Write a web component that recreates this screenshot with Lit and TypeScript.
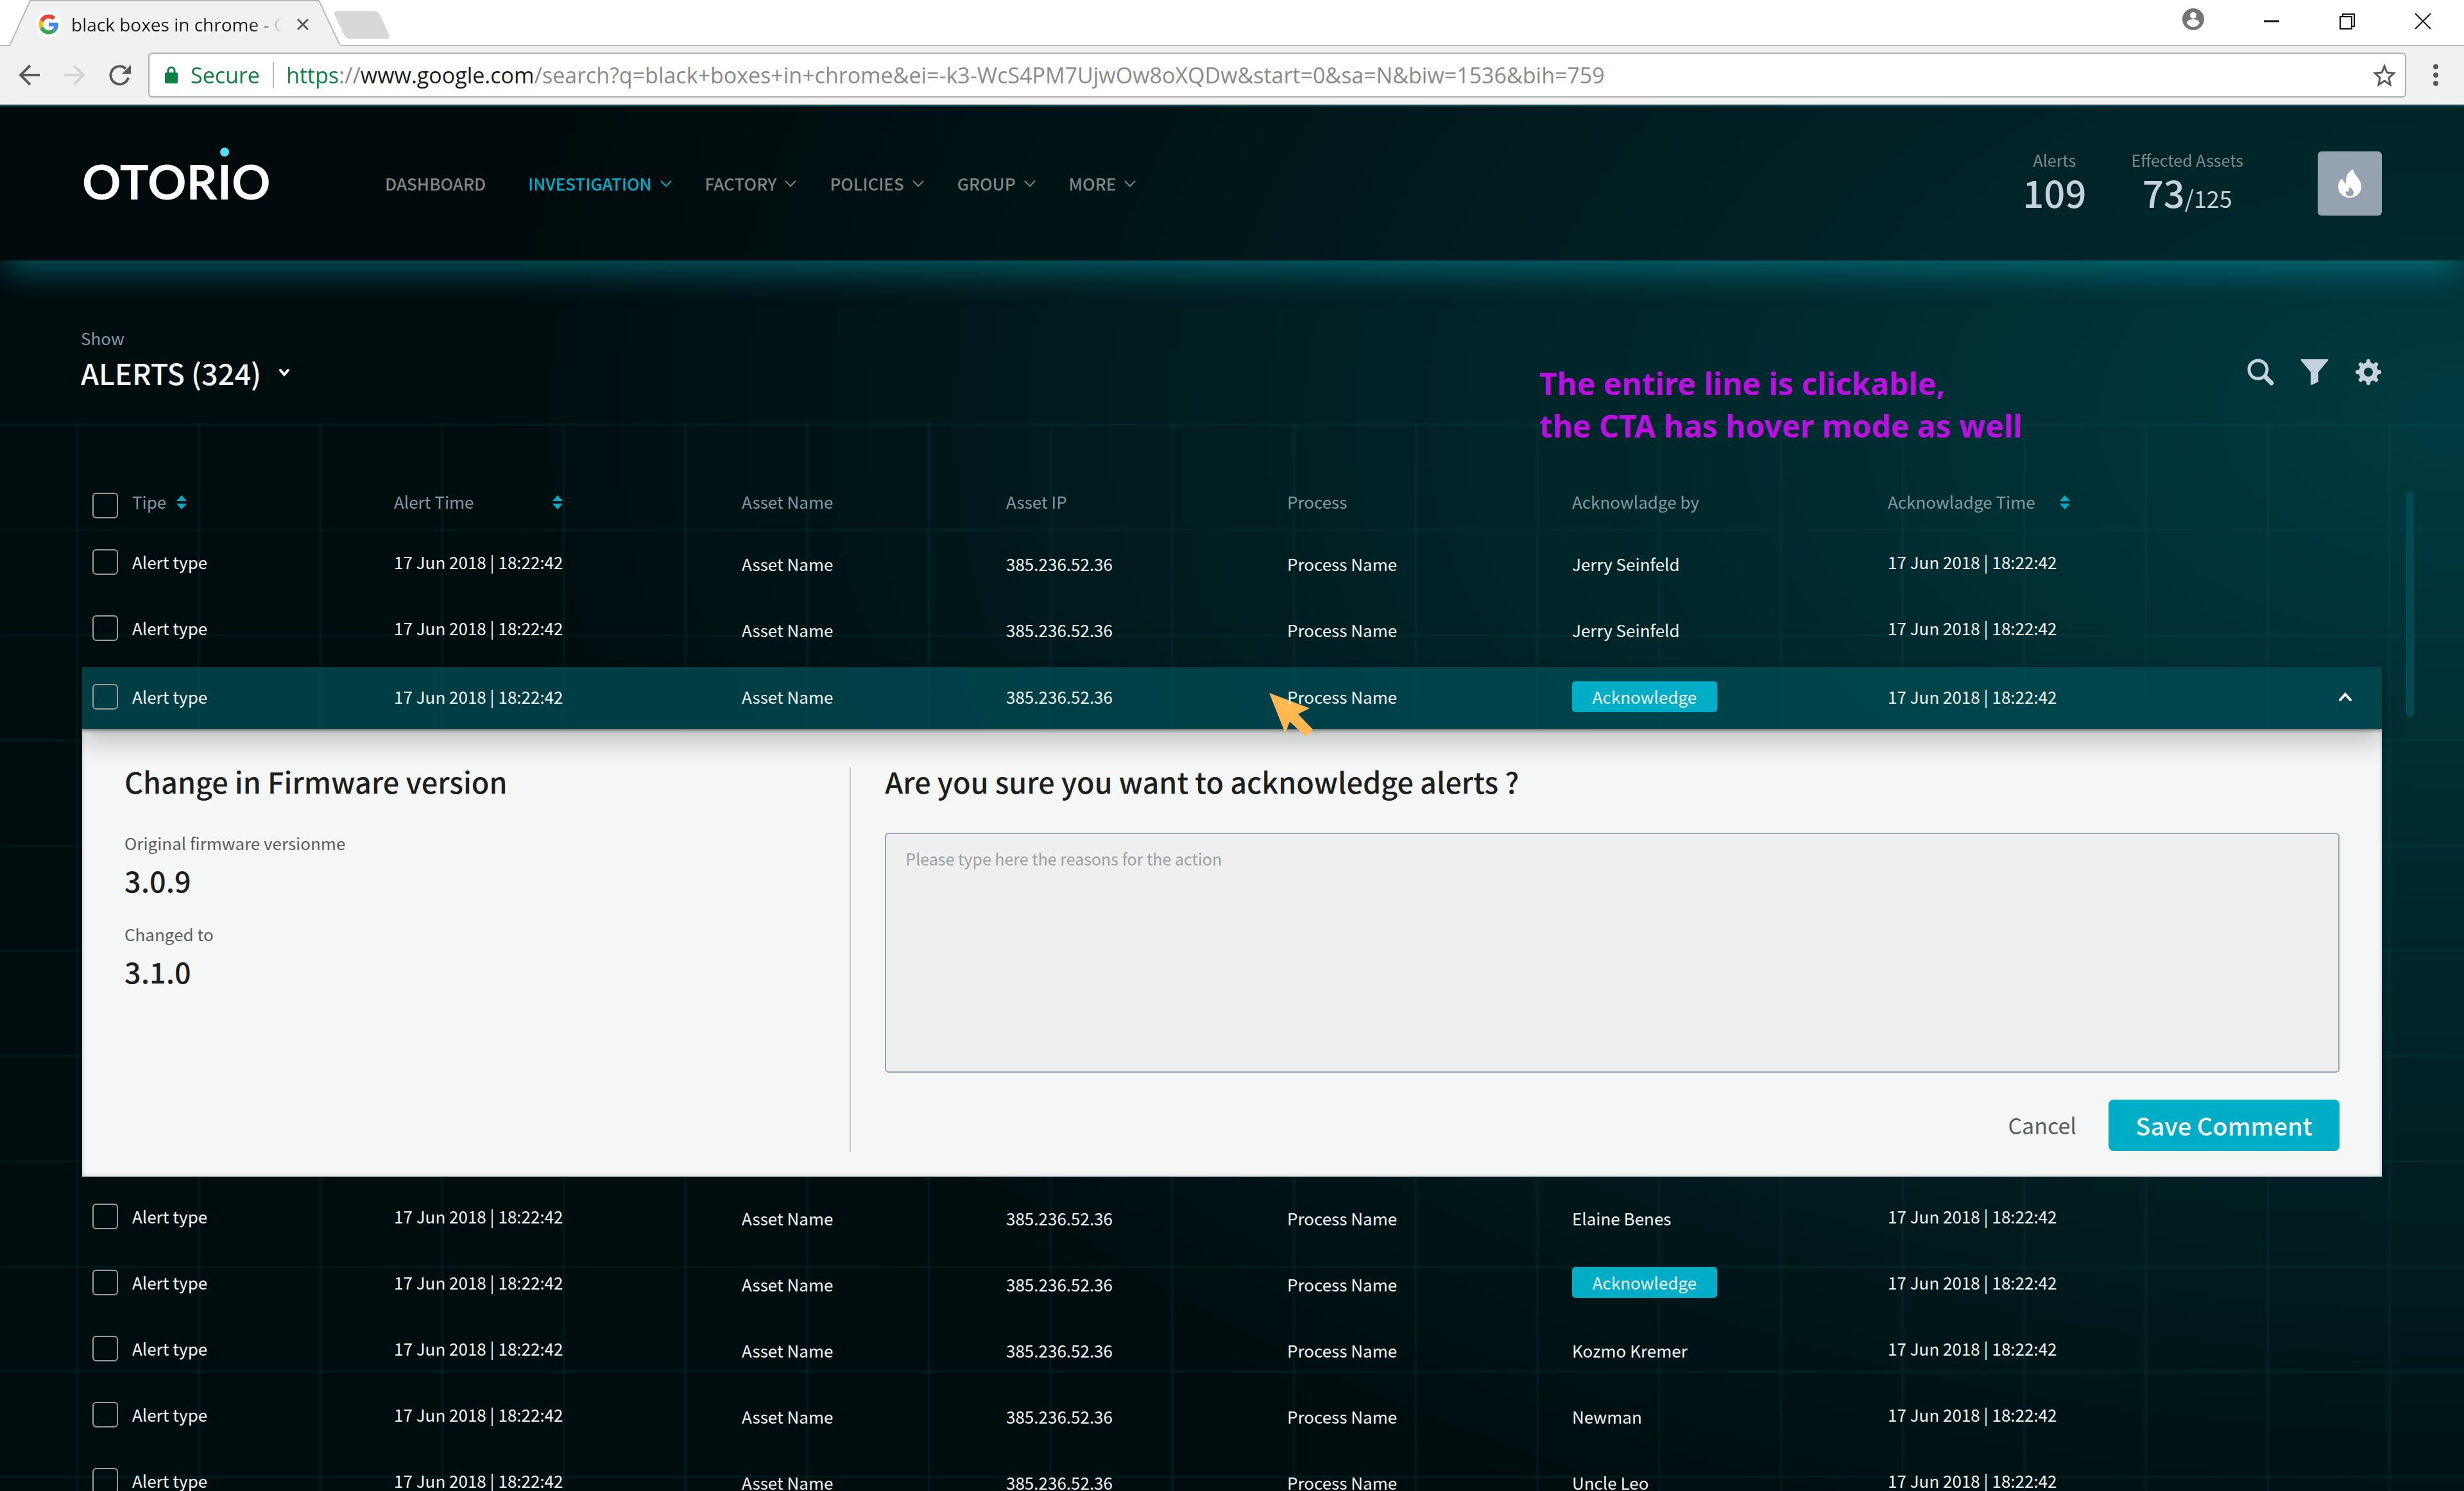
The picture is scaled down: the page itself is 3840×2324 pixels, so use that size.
import { LitElement, html, css, svg, nothing } from "lit";
import { customElement, property, state } from "lit/decorators.js";
import { classMap } from "lit/directives/class-map.js";

interface AlertRow {
  type: string;
  time: string;
  asset: string;
  ip: string;
  process: string;
  by: string | null;
  ackTime: string;
}

const STAMP = "17 Jun 2018 | 18:22:42";

const makeRow = (by: string | null): AlertRow => ({
  type: "Alert type",
  time: STAMP,
  asset: "Asset Name",
  ip: "385.236.52.36",
  process: "Process Name",
  by,
  ackTime: STAMP,
});

const ROWS: AlertRow[] = [
  makeRow("Jerry Seinfeld"),
  makeRow("Jerry Seinfeld"),
  makeRow(null),
  makeRow("Elaine Benes"),
  makeRow(null),
  makeRow("Kozmo Kremer"),
  makeRow("Newman"),
  makeRow("Uncle Leo"),
];

const HEADINGS = [
  { label: "Tipe", sort: "near" },
  { label: "Alert Time", sort: "far" },
  { label: "Asset Name", sort: "" },
  { label: "Asset IP", sort: "" },
  { label: "Process", sort: "" },
  { label: "Acknowladge by", sort: "" },
  { label: "Acknowladge Time", sort: "mid" },
];

const sortIcon = html`<svg class="sort" viewBox="0 0 16 22" aria-hidden="true">
  <path d="M8 0 L16 9 H0 Z M0 13 H16 L8 22 Z" fill="#00adc6" />
</svg>`;

/* Browser window frame: tab strip and address bar */
@customElement("browser-frame")
export class BrowserFrame extends LitElement {
  static styles = css`
    :host {
      display: block;
      font-family: "Open Sans", "Noto Sans", sans-serif;
      background: #f1f1f1;
      border-bottom: 2px solid #b3b3b7;
    }
    button {
      display: grid;
      place-items: center;
      padding: 0;
      border: 0;
      background: none;
    }
    svg {
      display: block;
    }
    .strip {
      display: flex;
      align-items: flex-start;
      height: 72px;
      box-sizing: border-box;
      border-bottom: 2px solid #b8b8b8;
      background: #fff;
    }
    .tab {
      position: relative;
      display: flex;
      align-items: center;
      width: 532px;
      height: 72px;
      padding: 4px 50px 0 56px;
      box-sizing: border-box;
    }
    .tab-shape {
      position: absolute;
      left: 0;
      top: 0;
      width: 100%;
      height: 72px;
    }
    .favicon {
      position: relative;
      width: 40px;
      height: 40px;
      border-radius: 50%;
      background: #fff;
    }
    .title {
      position: relative;
      flex: 1;
      margin-left: 15px;
      font-size: 28px;
      line-height: 40px;
      color: #1c1c1c;
      white-space: nowrap;
      overflow: hidden;
      -webkit-mask-image: linear-gradient(to right, #000 280px, transparent 330px);
      mask-image: linear-gradient(to right, #000 280px, transparent 330px);
    }
    .close {
      position: relative;
      width: 20px;
      height: 20px;
    }
    .new-tab {
      width: 88px;
      height: 44px;
      margin: 17px 0 0 -12px;
    }
    .window {
      display: flex;
      align-items: center;
      gap: 92px;
      height: 66px;
      margin-left: auto;
      padding-right: 51px;
    }
    .account {
      margin-top: -6px;
    }
    .bar {
      display: flex;
      align-items: center;
      padding: 10px 40px 10px 0;
    }
    .nav {
      display: flex;
      gap: 38px;
      padding: 0 27px 0 30px;
    }
    .omnibox {
      flex: 1;
      display: flex;
      align-items: center;
      height: 70px;
      box-sizing: border-box;
      padding: 0 14px 0 24px;
      border: 2px solid #b0b0b0;
      border-radius: 6px;
      background: #fff;
      font-size: 34px;
      line-height: 48px;
      color: #8a8a8a;
      white-space: nowrap;
    }
    .secure {
      margin-left: 20px;
      padding-right: 20px;
      border-right: 2px solid #b8b8b8;
      line-height: 40px;
      color: #0b8043;
    }
    .url {
      flex: 1;
      margin-left: 19px;
    }
    .scheme {
      color: #0b8043;
    }
    .domain {
      color: #1c1c1c;
    }
    .menu {
      margin-left: 42px;
    }
  `;

  render() {
    return html`
      <div class="strip">
        <div class="tab">
          <svg class="tab-shape" viewBox="0 0 532 72" preserveAspectRatio="none" aria-hidden="true">
            <path d="M0 72 L15 70 L47 1 H497 L530 70 L532 72 Z" fill="#f1f1f1" />
            <path d="M0 71 H15 L47 1 H497 L530 71" fill="none" stroke="#b8b8b8" stroke-width="2" />
          </svg>
          <svg class="favicon" viewBox="-7 -7 62 62" aria-hidden="true">
            <path fill="#EA4335" d="M24 9.5c3.54 0 6.71 1.22 9.21 3.6l6.85-6.85C35.9 2.38 30.47 0 24 0 14.62 0 6.51 5.38 2.56 13.22l7.98 6.19C12.43 13.72 17.74 9.5 24 9.5z" />
            <path fill="#4285F4" d="M46.98 24.55c0-1.57-.15-3.09-.38-4.55H24v9.02h12.94c-.58 2.96-2.26 5.48-4.78 7.18l7.73 6c4.51-4.18 7.09-10.36 7.09-17.65z" />
            <path fill="#FBBC05" d="M10.53 28.59c-.48-1.45-.76-2.99-.76-4.59s.27-3.14.76-4.59l-7.98-6.19C.92 16.46 0 20.12 0 24c0 3.88.92 7.54 2.56 10.78l7.97-6.19z" />
            <path fill="#34A853" d="M24 48c6.48 0 11.93-2.13 15.89-5.81l-7.73-6c-2.15 1.45-4.92 2.3-8.16 2.3-6.26 0-11.57-4.22-13.47-9.91l-7.98 6.19C6.51 42.62 14.62 48 24 48z" />
          </svg>
          <span class="title">black boxes in chrome - G</span>
          <button class="close" aria-label="Close tab">
            <svg width="20" height="20" viewBox="0 0 20 20">
              <path d="M2 2 L18 18 M18 2 L2 18" stroke="#5a5a5a" stroke-width="3" />
            </svg>
          </button>
        </div>
        <button class="new-tab" aria-label="New tab">
          <svg width="88" height="44" viewBox="0 0 88 44">
            <path d="M4 1 H64 Q69 1 71 5 L86 38 Q87 43 83 43 H25 Q20 43 18 39 L2 6 Q0 1 4 1 Z" fill="#d8d8d8" stroke="#cfcfcf" />
          </svg>
        </button>
        <div class="window">
          <button class="account" aria-label="Account">
            <svg width="34" height="34" viewBox="0 0 34 34">
              <circle cx="17" cy="17" r="17" fill="#757575" />
              <circle cx="17" cy="11" r="5" fill="#fff" />
              <path d="M7 23 Q8 17 17 17 Q26 17 27 23 Q23 29 17 29 Q11 29 7 23 Z" fill="#fff" />
            </svg>
          </button>
          <button aria-label="Minimize">
            <svg width="26" height="26" viewBox="0 0 26 26"><path d="M1 13 H25" stroke="#111" stroke-width="3" /></svg>
          </button>
          <button aria-label="Restore">
            <svg width="26" height="26" viewBox="0 0 26 26">
              <path d="M2 6 H20 V25 H2 Z M6 6 V2 H24 V21 H20" fill="none" stroke="#111" stroke-width="2" />
            </svg>
          </button>
          <button aria-label="Close">
            <svg width="26" height="26" viewBox="0 0 26 26">
              <path d="M1 1 L25 25 M25 1 L1 25" stroke="#111" stroke-width="2" />
            </svg>
          </button>
        </div>
      </div>
      <div class="bar">
        <div class="nav">
          <button aria-label="Back">
            <svg width="32" height="34" viewBox="0 0 32 34">
              <path d="M32 17 H2 M17 2 L2 17 L17 32" fill="none" stroke="#5a5a5a" stroke-width="4" />
            </svg>
          </button>
          <button aria-label="Forward" disabled>
            <svg width="32" height="34" viewBox="0 0 32 34">
              <path d="M0 17 H30 M15 2 L30 17 L15 32" fill="none" stroke="#d4d4d4" stroke-width="4" />
            </svg>
          </button>
          <button aria-label="Reload">
            <svg width="34" height="34" viewBox="0 0 34 34">
              <path d="M30 21 A14 14 0 1 1 26 7" fill="none" stroke="#5a5a5a" stroke-width="4" />
              <path d="M34 1 V15 H20 Z" fill="#5a5a5a" />
            </svg>
          </button>
        </div>
        <div class="omnibox">
          <svg width="20" height="28" viewBox="0 0 20 28" aria-hidden="true">
            <rect x="0" y="10" width="20" height="17" rx="2" fill="#0b8043" />
            <path d="M5 11 V7 A5 5 0 0 1 15 7 V11" fill="none" stroke="#0b8043" stroke-width="3" />
          </svg>
          <span class="secure">Secure</span>
          <span class="url"><span class="scheme">https</span>://<span class="domain">www.google.com</span>/search?q=black+boxes+in+chrome&amp;ei=-k3-WcS4PM7UjwOw8oXQDw&amp;start=0&amp;sa=N&amp;biw=1536&amp;bih=759</span>
          <button aria-label="Bookmark">
            <svg width="36" height="36" viewBox="0 0 36 36">
              <path d="M18 4 L22 14 L33 15 L25 22 L27 33 L18 27 L9 33 L11 22 L3 15 L14 14 Z" fill="none" stroke="#5a5a5a" stroke-width="3" />
            </svg>
          </button>
        </div>
        <button class="menu" aria-label="Menu">
          <svg width="8" height="34" viewBox="0 0 8 34">
            <circle cx="4" cy="4" r="4" fill="#5a5a5a" />
            <circle cx="4" cy="17" r="4" fill="#5a5a5a" />
            <circle cx="4" cy="30" r="4" fill="#5a5a5a" />
          </svg>
        </button>
      </div>
    `;
  }
}

/* Product header: logo, navigation and alert counters */
@customElement("site-header")
export class SiteHeader extends LitElement {
  static styles = css`
    :host {
      position: relative;
      z-index: 1;
      display: flex;
      align-items: center;
      height: 240px;
      padding: 0 128px;
      border-top: 2px solid #00484f;
      background: rgba(0, 0, 0, 0.2);
      box-shadow: 0 30px 44px -10px rgba(0, 190, 210, 0.36);
    }
    .logo {
      flex: 0 0 472px;
      padding-bottom: 8px;
      font: 700 75px/80px Lato, sans-serif;
      color: #fff;
      text-decoration: none;
    }
    .dotted {
      position: relative;
    }
    .dot {
      position: absolute;
      left: calc(50% - 7px);
      top: -7px;
      width: 14px;
      height: 14px;
      border-radius: 50%;
      background: #55e0f2;
    }
    nav {
      display: flex;
      gap: 51px;
    }
    .item {
      display: flex;
      align-items: center;
      gap: 12px;
      padding: 0;
      border: 0;
      background: none;
      font: inherit;
      font-size: 26px;
      line-height: 36px;
      font-weight: 500;
      color: #7f8686;
      text-decoration: none;
    }
    .home {
      margin-right: 15px;
    }
    .current {
      color: #00adc6;
    }
    .stats {
      display: flex;
      gap: 70px;
      margin-left: auto;
      padding-bottom: 2px;
      text-align: center;
      color: #c5d1db;
    }
    .stat {
      margin: 0;
    }
    dt {
      font-size: 25px;
      line-height: 36px;
      color: #7f8b8c;
    }
    dd {
      margin: 0;
      font-size: 58px;
      line-height: 64px;
      font-weight: 500;
    }
    .total {
      font-size: 36px;
      font-weight: 400;
    }
    .fire {
      display: grid;
      place-items: center;
      width: 100px;
      height: 100px;
      margin-left: 116px;
      padding: 0;
      border: 0;
      border-radius: 6px;
      background: #95a3b0;
    }
  `;

  render() {
    const items = ["INVESTIGATION", "FACTORY", "POLICIES", "GROUP", "MORE"];
    return html`
      <a class="logo" href="#">OTOR<span class="dotted">I<span class="dot"></span></span>O</a>
      <nav>
        <a class="item home" href="#">DASHBOARD</a>
        ${items.map(
          (label, i) => html`<button class=${classMap({ item: true, current: i === 0 })}>
            ${label}
            <svg width="20" height="12" viewBox="0 0 20 12" aria-hidden="true">
              <path d="M2 2 L10 10 L18 2" fill="none" stroke="currentColor" stroke-width="2" />
            </svg>
          </button>`
        )}
      </nav>
      <div class="stats">
        <dl class="stat"><dt>Alerts</dt><dd>109</dd></dl>
        <dl class="stat"><dt>Effected Assets</dt><dd>73<span class="total">/125</span></dd></dl>
      </div>
      <button class="fire" aria-label="Critical events">
        <svg width="36" height="44" viewBox="0 0 36 44">
          <path fill="#fff" fill-rule="evenodd" d="M23 0 C25 10 36 15 36 27 C36 37 28 44 18 44 C8 44 0 37 0 27 C0 21 3 15 7 15 C8 20 10 21 12 22 C11 11 15 4 23 0 Z M19 27 C16 30 17 33 16 35 C14 35 13 34 12 33 C11 38 13 42 18 42 C22 42 24 39 24 36 C24 32 20 31 19 27 Z" />
        </svg>
      </button>
    `;
  }
}

/* Detail panel that opens beneath an alert */
@customElement("alert-detail")
export class AlertDetail extends LitElement {
  @property() from = "3.0.9";
  @property() to = "3.1.0";

  static styles = css`
    :host {
      display: grid;
      grid-template-columns: 1131fr 2323fr;
      padding: 54px 66px 40px 66px;
      background: #f5f7f6;
      box-shadow: inset 0 0 6px rgba(0, 30, 20, 0.25);
      color: #1d1f1f;
    }
    h2 {
      margin: 0;
      font-size: 45px;
      line-height: 56px;
      font-weight: 500;
    }
    dl {
      display: grid;
      gap: 38px;
      margin: 50px 0 0;
    }
    .pair {
      display: grid;
      gap: 12px;
    }
    dt {
      font-size: 26px;
      line-height: 36px;
      color: #5a5d5d;
    }
    dd {
      margin: 0;
      font-size: 45px;
      line-height: 56px;
      font-weight: 500;
    }
    form {
      position: relative;
      display: grid;
      padding-left: 55px;
    }
    .divider {
      position: absolute;
      left: 0;
      top: 6px;
      bottom: -2px;
      width: 2px;
      background: #c4c7c7;
    }
    textarea {
      height: 374px;
      margin-top: 52px;
      box-sizing: border-box;
      padding: 20px 30px;
      border: 2px solid #93a5b3;
      border-radius: 6px;
      background: #efefef;
      font: inherit;
      font-size: 25px;
      line-height: 36px;
      color: #1d1f1f;
      resize: none;
    }
    textarea::placeholder {
      color: #9aa0a3;
    }
    .actions {
      display: flex;
      justify-content: flex-end;
      gap: 50px;
      margin-top: 42px;
    }
    button {
      padding: 0;
      border: 0;
      background: none;
      font: inherit;
      font-size: 34px;
      line-height: 80px;
      color: #5a5d5d;
    }
    .save {
      width: 360px;
      border-radius: 8px;
      background: #00adc6;
      font-size: 38px;
      font-weight: 500;
      color: #f5f7f6;
    }
  `;

  render() {
    return html`
      <section>
        <h2>Change in Firmware version</h2>
        <dl>
          <div class="pair"><dt>Original firmware versionme</dt><dd>${this.from}</dd></div>
          <div class="pair"><dt>Changed to</dt><dd>${this.to}</dd></div>
        </dl>
      </section>
      <form @submit=${(e: Event) => e.preventDefault()}>
        <span class="divider"></span>
        <h2 id="question">Are you sure you want to acknowledge alerts ?</h2>
        <textarea aria-labelledby="question" placeholder="Please type here the reasons for the action"></textarea>
        <div class="actions">
          <button type="button">Cancel</button>
          <button class="save" type="submit">Save Comment</button>
        </div>
      </form>
    `;
  }
}

/* Table of alerts with one expandable row */
@customElement("alerts-table")
export class AlertsTable extends LitElement {
  @state() private open = 2;

  static styles = css`
    :host {
      display: block;
    }
    table,
    thead,
    tbody {
      display: block;
    }
    tr {
      display: grid;
      grid-template-columns: 486fr 542fr 412fr 438fr 444fr 492fr 770fr;
      align-items: center;
      height: 103px;
    }
    th,
    td {
      display: flex;
      align-items: center;
      padding: 0;
      font-size: 26px;
      line-height: 36px;
      font-weight: 400;
      white-space: nowrap;
      color: #f2f6f6;
    }
    thead tr {
      height: 72px;
    }
    th {
      color: #8798a3;
    }
    .label {
      display: flex;
      align-items: center;
      padding-bottom: 13px;
    }
    .lower {
      padding-top: 6px;
    }
    .sort {
      width: 16px;
      height: 22px;
      margin: 3px 0 0 16px;
    }
    .far .sort {
      margin-left: 122px;
    }
    .mid .sort {
      margin-left: 38px;
    }
    input {
      appearance: none;
      width: 40px;
      height: 40px;
      margin: 0 22px 0 16px;
      border: 2px solid #9a9c9c;
      border-radius: 6px;
    }
    .active {
      position: relative;
      z-index: 1;
      height: 92px;
      margin-top: 10px;
      padding-bottom: 4px;
      background: rgba(0, 76, 85, 0.78);
      box-shadow: 0 24px 36px rgba(0, 0, 0, 0.2), 0 2px 6px rgba(0, 0, 0, 0.45);
    }
    .active .lower {
      padding-top: 0;
    }
    .ack {
      width: 226px;
      height: 48px;
      padding: 0;
      border: 0;
      border-radius: 5px;
      background: #00adc6;
      font: inherit;
      line-height: 44px;
      color: #f2f6f6;
    }
    .toggle {
      margin: 0 46px 0 auto;
      padding: 0;
      border: 0;
      background: none;
    }
    .toggle svg {
      display: block;
    }
    .detail {
      display: block;
      height: auto;
      margin-bottom: 10px;
    }
    .detail td {
      display: block;
      white-space: normal;
    }
    .process {
      position: relative;
    }
    .over {
      position: relative;
    }
    .pointer {
      position: absolute;
      left: -28px;
      top: 12px;
      width: 68px;
      height: 68px;
    }
  `;

  private row(r: AlertRow, i: number) {
    const active = i === this.open;
    return html`
      <tr class=${classMap({ active })}>
        <td><input type="checkbox" id="row-${i}" /><label for="row-${i}">${r.type}</label></td>
        <td>${r.time}</td>
        <td class="lower">${r.asset}</td>
        <td class="lower">${r.ip}</td>
        <td class="lower process">
          ${active
            ? html`<svg class="pointer" viewBox="0 0 68 68" aria-hidden="true">
                <path d="M0 0 L63 24 L45 33 L68 57 L57 68 L32 45 L25 63 Z" fill="#ffb84f" />
              </svg>`
            : nothing}
          <span class="over">${r.process}</span>
        </td>
        ${r.by ? html`<td class="lower">${r.by}</td>` : html`<td><button class="ack">Acknowledge</button></td>`}
        <td>
          ${r.ackTime}
          ${active
            ? html`<button class="toggle" aria-label="Collapse" @click=${() => (this.open = -1)}>
                <svg width="22" height="16" viewBox="0 0 22 16">
                  <path d="M3 13 L11 4 L19 13" fill="none" stroke="#fff" stroke-width="4" stroke-linecap="round" />
                </svg>
              </button>`
            : nothing}
        </td>
      </tr>
      ${active
        ? html`<tr class="detail"><td colspan="7"><alert-detail></alert-detail></td></tr>`
        : nothing}
    `;
  }

  render() {
    return html`
      <table>
        <thead>
          <tr>
            ${HEADINGS.map(
              (h, i) => html`<th scope="col" class=${h.sort}>
                ${i === 0 ? html`<input type="checkbox" aria-label="Select all" />` : nothing}
                <span class="label">${h.label}${h.sort ? sortIcon : nothing}</span>
              </th>`
            )}
          </tr>
        </thead>
        <tbody>
          ${ROWS.map((r, i) => this.row(r, i))}
        </tbody>
      </table>
    `;
  }
}

@customElement("app-root")
export class AppRoot extends LitElement {
  static styles = css`
    :host {
      display: flex;
      flex-direction: column;
      height: 100vh;
      overflow: hidden;
      font-family: "Noto Sans CJK SC", "Noto Sans", sans-serif;
      background: radial-gradient(ellipse 80% 82% at 100% 28%, #003a40, #000d0f);
    }
    main {
      flex: 1;
      display: flex;
      flex-direction: column;
      min-height: 0;
    }
    .toolbar {
      position: relative;
      display: flex;
      justify-content: space-between;
      height: 151px;
      padding: 103px 128px 0 126px;
    }
    .show {
      display: grid;
      gap: 4px;
      justify-items: start;
      align-content: start;
      font-size: 26px;
      line-height: 36px;
      color: #8798a3;
    }
    .picker {
      display: flex;
      align-items: center;
      gap: 26px;
    }
    select {
      appearance: none;
      padding: 0;
      border: 0;
      background: none;
      font: inherit;
      font-size: 45px;
      line-height: 64px;
      font-weight: 500;
      color: #f5f7f6;
    }
    .tools {
      display: flex;
      align-items: center;
      gap: 41px;
      height: 142px;
    }
    .tools button {
      padding: 0;
      border: 0;
      background: none;
    }
    svg {
      display: block;
    }
    .note {
      position: absolute;
      left: calc(62% + 18px);
      top: 159px;
      margin: 0;
      font: 700 48px/66px "Noto Sans", "Open Sans", sans-serif;
      color: #bd10e0;
      white-space: nowrap;
    }
    .list {
      position: relative;
      flex: 1;
      min-height: 0;
      padding: 0 118px;
      background-image: linear-gradient(to right, rgba(0, 120, 120, 0.1) 4px, transparent 4px),
        linear-gradient(rgba(0, 120, 120, 0.1) 4px, transparent 4px);
      background-size: 190px 164px;
      background-origin: content-box;
      background-repeat: round repeat;
    }
    alerts-table {
      padding: 92px 10px 0;
    }
    .scroll {
      position: absolute;
      right: 78px;
      top: 106px;
      width: 12px;
      height: 352px;
      border-radius: 6px;
      background: #004a52;
    }
  `;

  private gear() {
    const teeth = [0, 45, 90, 135, 180, 225, 270, 315];
    return svg`
      <path fill="#c5d1db" fill-rule="evenodd" d="M21 6 A15 15 0 1 0 21 36 A15 15 0 1 0 21 6 Z M21 14 A7 7 0 1 1 21 28 A7 7 0 1 1 21 14 Z" />
      ${teeth.map((a) => svg`<path d="M15 9 Q18 7 18 3 Q18 1 20 1 H22 Q24 1 24 3 Q24 7 27 9 Z" fill="#c5d1db" transform="rotate(${a} 21 21)" />`)}
    `;
  }

  render() {
    return html`
      <browser-frame></browser-frame>
      <site-header></site-header>
      <main>
        <div class="toolbar">
          <div class="show">
            <label for="show">Show</label>
            <div class="picker">
              <select id="show"><option>ALERTS (324)</option></select>
              <svg width="18" height="14" viewBox="0 0 18 14" aria-hidden="true">
                <path d="M3 3 L9 10 L15 3" fill="none" stroke="#fff" stroke-width="4" stroke-linecap="round" />
              </svg>
            </div>
          </div>
          <div class="tools">
            <button aria-label="Search">
              <svg width="42" height="42" viewBox="0 0 42 42">
                <circle cx="17" cy="17" r="14" fill="none" stroke="#c5d1db" stroke-width="5" />
                <path d="M28 28 L38 38" stroke="#c5d1db" stroke-width="7" stroke-linecap="round" />
              </svg>
            </button>
            <button aria-label="Filter">
              <svg width="44" height="42" viewBox="0 0 44 42">
                <path d="M1 1 H43 Q44 2 43 3 L28 21 V36 L18 41 Q16 41 16 40 V21 L1 3 Q0 2 1 1 Z" fill="#c5d1db" />
              </svg>
            </button>
            <button aria-label="Settings">
              <svg width="42" height="42" viewBox="0 0 42 42">${this.gear()}</svg>
            </button>
          </div>
          <p class="note">The entire line is clickable,<br />the CTA has hover mode as well</p>
        </div>
        <div class="list">
          <alerts-table></alerts-table>
          <span class="scroll"></span>
        </div>
      </main>
    `;
  }
}
